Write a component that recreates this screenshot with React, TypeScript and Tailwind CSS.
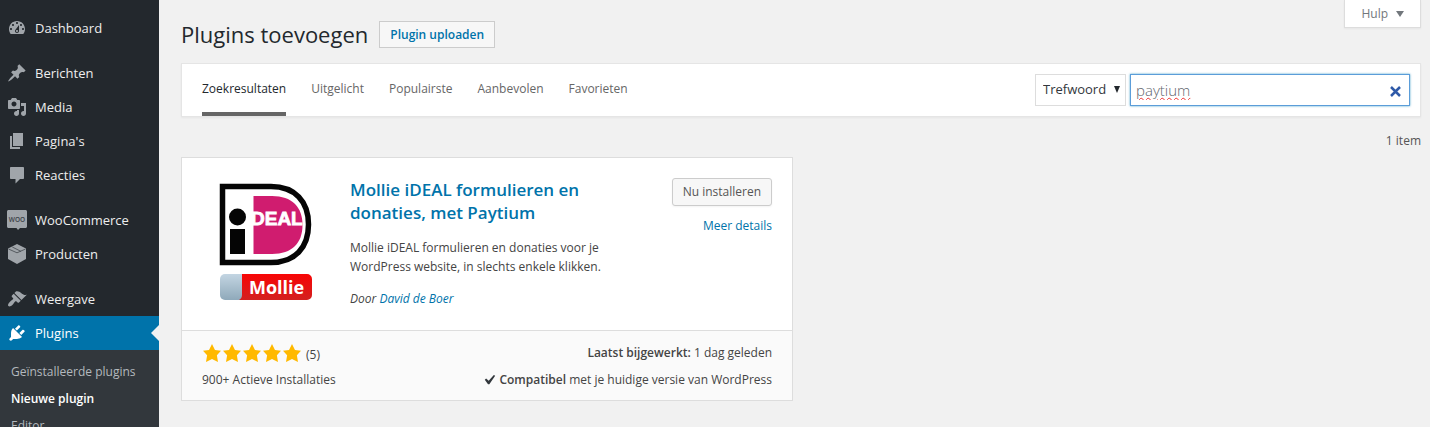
import type { ReactNode } from 'react';

type IconName =
  | 'dashboard'
  | 'post'
  | 'media'
  | 'page'
  | 'comments'
  | 'woo'
  | 'products'
  | 'appearance'
  | 'plugins';

const paths: Partial<Record<IconName, string>> = {
  dashboard:
    'M3.76 16h12.48c1.1-1.37 1.76-3.11 1.76-5 0-4.42-3.58-8-8-8s-8 3.58-8 8c0 1.89.66 3.63 1.76 5zM10 4c.55 0 1 .45 1 1s-.45 1-1 1-1-.45-1-1 .45-1 1-1zM6 6c.55 0 1 .45 1 1s-.45 1-1 1-1-.45-1-1 .45-1 1-1zm8 0c.55 0 1 .45 1 1s-.45 1-1 1-1-.45-1-1 .45-1 1-1zm-5.37 5.55L12 7v6c0 1.1-.9 2-2 2s-2-.9-2-2c0-.57.24-1.08.63-1.45zM4 10c.55 0 1 .45 1 1s-.45 1-1 1-1-.45-1-1 .45-1 1-1zm12 0c.55 0 1 .45 1 1s-.45 1-1 1-1-.45-1-1 .45-1 1-1zm-5 3c0-.55-.45-1-1-1s-1 .45-1 1 .45 1 1 1 1-.45 1-1z',
  post: 'M10.44 3.02l1.82-1.82 6.36 6.35-1.83 1.82c-1.05-.68-2.48-.57-3.41.36l-.75.75c-.92.93-1.04 2.35-.35 3.41l-1.83 1.82-2.41-2.41-2.8 2.79c-.42.42-3.38 2.71-3.8 2.29s1.86-3.39 2.28-3.81l2.79-2.79L4.1 9.36l1.83-1.82c1.05.69 2.48.57 3.4-.36l.75-.75c.93-.92 1.05-2.35.36-3.41z',
  media:
    'M13 11V4c0-.55-.45-1-1-1h-1.67L9 1H5L3.67 3H2c-.55 0-1 .45-1 1v7c0 .55.45 1 1 1h10c.55 0 1-.45 1-1zM7 4.5c1.38 0 2.5 1.12 2.5 2.5S8.38 9.5 7 9.5 4.5 8.38 4.5 7 5.62 4.5 7 4.5zM14 6h5v10.5c0 1.38-1.12 2.5-2.5 2.5S14 17.88 14 16.5s1.12-2.5 2.5-2.5c.17 0 .34.02.5.05V9h-3V6zm-4 8.05V13h2v3.5c0 1.38-1.12 2.5-2.5 2.5S7 17.88 7 16.5 8.12 14 9.5 14c.17 0 .34.02.5.05z',
  page: 'M6 15V2h10v13H6zm-1 1h8v2H3V5h2v11z',
  comments: 'M4 2h12c.55 0 1 .45 1 1v10c0 .55-.45 1-1 1h-3l-4.500 4.500V14H4c-.55 0-1-.45-1-1V3c0-.55.45-1 1-1z',
  appearance:
    'M14.48 11.06L7.41 3.99l1.5-1.5c.5-.56 2.3-.47 3.51.32 1.21.8 1.43 1.28 2.91 2.1 1.18.64 2.45 1.26 4.45.85zm-.71.71L6.7 4.7 4.93 6.47c-.39.39-.39 1.02 0 1.41l1.06 1.06c.39.39.39 1.03 0 1.42-.6.6-1.43 1.11-2.21 1.69-.35.26-.7.53-1.01.84C1.43 14.23.4 16.08 1.4 17.07c.99 1 2.84-.03 4.18-1.36.31-.31.58-.66.85-1.02.57-.78 1.08-1.61 1.69-2.21.39-.39 1.02-.39 1.41 0l1.06 1.06c.39.39 1.02.39 1.41 0z',
  plugins:
    'M13.11 4.36L9.87 7.6 8 5.73l3.24-3.24c.35-.34 1.05-.2 1.56.32.52.51.66 1.21.31 1.55zm-8 1.77l.91-1.12 9.01 9.01-1.19.84c-.71.71-2.63 1.16-3.82 1.16H6.14L4.9 17.26c-.59.59-1.54.59-2.12 0-.59-.58-.59-1.53 0-2.12l1.24-1.24v-3.88c0-1.13.4-3.19 1.09-3.89zm7.26 3.97l3.24-3.24c.34-.35 1.04-.21 1.55.31.52.51.66 1.21.31 1.55l-3.24 3.25z',
};

const menu: { icon: IconName; label: string }[][] = [
  [{ icon: 'dashboard', label: 'Dashboard' }],
  [
    { icon: 'post', label: 'Berichten' },
    { icon: 'media', label: 'Media' },
    { icon: 'page', label: "Pagina's" },
    { icon: 'comments', label: 'Reacties' },
  ],
  [
    { icon: 'woo', label: 'WooCommerce' },
    { icon: 'products', label: 'Producten' },
  ],
  [
    { icon: 'appearance', label: 'Weergave' },
    { icon: 'plugins', label: 'Plugins' },
  ],
];

const submenu = ['Geïnstalleerde plugins', 'Nieuwe plugin', 'Editor'];

const tabs = ['Zoekresultaten', 'Uitgelicht', 'Populairste', 'Aanbevolen', 'Favorieten'];

export default function App() {
  return (
    <div className="flex h-screen overflow-hidden bg-[#f1f1f1] font-['Open_Sans',sans-serif] text-xs text-[#444]">
      <Sidebar />
      <main className="min-w-0 flex-1 pr-[9px] pl-[22px]">
        <header className="flex items-start justify-between">
          <div className="flex items-center gap-[11px] pt-5">
            <h1 className="text-[22px] leading-7 text-[#23282d]">Plugins toevoegen</h1>
            <a
              href="#upload"
              className="border border-[#ccc] bg-[#f7f7f7] px-[10px] text-xs leading-[25px] font-semibold text-[#0073aa]"
            >
              Plugin uploaden
            </a>
          </div>
          <button
            type="button"
            className="flex h-7 items-center gap-2 border border-t-0 border-[#ddd] bg-white px-4 text-xs text-[#72777c] shadow-xs"
          >
            Hulp
            <svg viewBox="0 0 8 6" className="h-[6px] w-2" fill="currentColor">
              <path d="M0 0h8L4 6z" />
            </svg>
          </button>
        </header>
        <FilterBar />
        <p className="mt-4 text-right leading-4 text-[#555]">1 item</p>
        <PluginCard />
      </main>
    </div>
  );
}

function Sidebar() {
  return (
    <nav className="flex w-[159px] shrink-0 flex-col bg-[#23282d] pt-[11px]">
      <ul className="space-y-[11px]">
        {menu.map((group) => (
          <li key={group[0].label}>
            <ul>
              {group.map(({ icon, label }) => (
                <li key={label}>
                  <MenuLink icon={icon} label={label} current={label === 'Plugins'} />
                </li>
              ))}
            </ul>
          </li>
        ))}
      </ul>
      <ul className="flex-1 bg-[#32373c] pt-2">
        {submenu.map((label) => (
          <li key={label}>
            <a
              href="#plugins"
              className={
                label === 'Nieuwe plugin'
                  ? 'block pl-[11px] leading-[27px] font-semibold text-white'
                  : 'block pl-[11px] leading-[27px] whitespace-nowrap text-[#b4b9be]'
              }
            >
              {label}
            </a>
          </li>
        ))}
      </ul>
    </nav>
  );
}

function MenuLink({ icon, label, current }: { icon: IconName; label: string; current: boolean }) {
  return (
    <a
      href="#menu"
      className={
        current
          ? 'relative flex h-[34px] items-center gap-2 bg-[#0073aa] pl-[7px] text-[13px] text-white'
          : 'flex h-[34px] items-center gap-2 pl-[7px] text-[13px] text-[#eee]'
      }
    >
      <MenuIcon name={icon} className={current ? 'size-5 text-white' : 'size-5 text-[#a0a5aa]'} />
      <span className="pt-0.5">{label}</span>
      {current && (
        <svg viewBox="0 0 8 16" className="absolute top-[9px] right-0 h-4 w-2" fill="#f1f1f1">
          <path d="M8 0v16L0 8z" />
        </svg>
      )}
    </a>
  );
}

function MenuIcon({ name, className }: { name: IconName; className: string }) {
  let shape: ReactNode = <path d={paths[name]} />;
  if (name === 'woo') {
    shape = (
      <>
        <path d="M1.500 0h17c.8 0 1.500.7 1.500 1.500v15c0 .8-.7 1.500-1.500 1.500H13l-2 2-1.500-2h-8C.7 18 0 17.300 0 16.500v-15C0 .7.700 0 1.500 0z" />
        <text x="10" y="11.500" textAnchor="middle" fontSize="6.500" fontWeight="600" fill="#3c4248">
          WOO
        </text>
      </>
    );
  }
  if (name === 'products') {
    shape = (
      <>
        <path d="M10 0l9 4.500v10.500l-9 5-9-5V4.500z" />
        <path d="M1.500 5L10 8.800l8.500-3.800M5.300 3l8.500 4.300" fill="none" stroke="#23282d" strokeWidth=".6" />
      </>
    );
  }
  return (
    <svg viewBox="0 0 20 20" className={className} fill="currentColor" aria-hidden="true">
      {shape}
    </svg>
  );
}

function FilterBar() {
  return (
    <div className="mt-[15px] flex h-[54px] items-center justify-between border border-[#e5e5e5] bg-white pr-[10px] pl-5 shadow-xs">
      <ul className="flex gap-[25px] self-stretch">
        {tabs.map((tab, i) => (
          <li key={tab} className="flex">
            <a
              href="#tab"
              className={
                i === 0
                  ? 'border-b-4 border-[#666] pt-4 leading-[18px] text-[#23282d]'
                  : 'pt-4 leading-[18px] text-[#666]'
              }
            >
              {tab}
            </a>
          </li>
        ))}
      </ul>
      <form className="flex gap-1">
        <div className="relative">
          <select
            aria-label="Zoeken op"
            className="h-8 w-[91px] appearance-none border border-[#ddd] bg-white pl-[7px] text-[13px] text-[#32373c]"
          >
            <option>Trefwoord</option>
          </select>
          <svg
            viewBox="0 0 6 7"
            className="pointer-events-none absolute top-3 right-[6px] h-[7px] w-[6px]"
            fill="#23282d"
          >
            <path d="M0 0h6L3 7z" />
          </svg>
        </div>
        <div className="relative">
          <input
            type="text"
            aria-label="Plugins zoeken"
            defaultValue="paytium"
            spellCheck={false}
            className="h-8 w-[280px] border border-[#5b9dd9] bg-white px-[5px] text-[15px] font-light text-[#5f666d] shadow-[0_0_2px_rgba(30,140,190,0.8)] underline decoration-[#f03030] decoration-wavy decoration-1 outline-none"
          />
          <button type="button" aria-label="Wissen" className="absolute top-3 right-[9px]">
            <svg viewBox="0 0 11 11" className="size-[11px]" stroke="#2f5aa8" strokeWidth="2.500">
              <path d="M1 1l9 9M10 1L1 10" />
            </svg>
          </button>
        </div>
      </form>
    </div>
  );
}

function PluginCard() {
  return (
    <article className="mt-2 w-1/2 max-w-[612px] border border-[#ddd] bg-white">
      <div className="flex min-h-[172px] px-5 pt-5">
        <PluginLogo />
        <div className="ml-5 w-[270px]">
          <h2 className="text-[17px] leading-[23px] font-semibold text-[#0073aa]">
            <a href="#plugin">Mollie iDEAL formulieren en donaties, met Paytium</a>
          </h2>
          <p className="mt-[14px] leading-[19px]">
            Mollie iDEAL formulieren en donaties voor je WordPress website, in slechts enkele klikken.
          </p>
          <p className="mt-[13px] leading-[19px] italic">
            Door{' '}
            <a href="#author" className="text-[#0073aa]">
              David de Boer
            </a>
          </p>
        </div>
        <div className="ml-auto flex flex-col items-end gap-[11px]">
          <button
            type="button"
            className="h-7 rounded-[3px] border border-[#ccc] bg-[#f7f7f7] px-[10px] text-[#555] shadow-xs"
          >
            Nu installeren
          </button>
          <a href="#details" className="leading-[18px] text-[#0073aa]">
            Meer details
          </a>
        </div>
      </div>
      <div className="flex justify-between border-t border-[#ddd] bg-[#fafafa] px-5 pt-3 pb-[10px]">
        <div className="space-y-[7px]">
          <div className="flex h-5 items-center">
            {[1, 2, 3, 4, 5].map((n) => (
              <svg key={n} viewBox="0 0 20 20" className="size-5" fill="#ffb900" aria-hidden="true">
                <path d="M10 1l3 6 6 .75-4.12 4.62L16 19l-6-3-6 3 1.13-6.63L1 7.75 7 7z" />
              </svg>
            ))}
            <span className="pt-1 pl-1">(5)</span>
          </div>
          <p className="leading-5">900+ Actieve Installaties</p>
        </div>
        <div className="space-y-[7px] text-right leading-5">
          <p>
            <strong className="font-semibold">Laatst bijgewerkt:</strong> 1 dag geleden
          </p>
          <p className="flex items-center">
            <svg viewBox="0 0 20 20" className="size-5" fill="#32373c" aria-hidden="true">
              <path d="M14.83 4.89l1.34.94-5.81 8.38H9.02L5.78 9.67l1.34-1.25 2.57 2.4z" />
            </svg>
            <span>
              <strong className="font-semibold">Compatibel</strong> met je huidige versie van WordPress
            </span>
          </p>
        </div>
      </div>
    </article>
  );
}

function PluginLogo() {
  return (
    <svg viewBox="0 0 128 128" className="size-32 shrink-0" role="img" aria-label="iDEAL Mollie">
      <defs>
        <linearGradient id="steel" x1="0" y1="0" x2="0" y2="1">
          <stop offset="0" stopColor="#c3d5e2" />
          <stop offset="1" stopColor="#8fa9ba" />
        </linearGradient>
        <linearGradient id="red" x1="0" y1="0" x2="0" y2="1">
          <stop offset="0" stopColor="#f80505" />
          <stop offset="1" stopColor="#d3201f" />
        </linearGradient>
      </defs>
      <path
        d="M20.500 8.500H69c24 0 37.500 15 37.500 38s-13.500 38-37.500 38H20.500z"
        fill="#fff"
        stroke="#050505"
        strokeWidth="5.500"
      />
      <path d="M51.500 18H70c20 0 30.500 11 30.500 29S90 76 70 76H51.500z" fill="#d01c6f" />
      <text
        x="49"
        y="47"
        fontSize="19"
        fontWeight="700"
        fill="#fff"
        stroke="#fff"
        strokeWidth=".8"
        className="font-['Liberation_Sans',sans-serif]"
      >
        DEAL
      </text>
      <circle cx="35.500" cy="39" r="8.500" fill="#050505" />
      <path d="M28 51h15v25H28z" fill="#050505" />
      <rect x="18" y="96" width="40" height="26" rx="5" fill="url(#steel)" />
      <path d="M40 96h65a5 5 0 0 1 5 5v16a5 5 0 0 1-5 5H37c2-1 3-3 3-5z" fill="url(#red)" />
      <text x="47" y="116" fontSize="18" fontWeight="700" fill="#fff">
        Mollie
      </text>
    </svg>
  );
}
